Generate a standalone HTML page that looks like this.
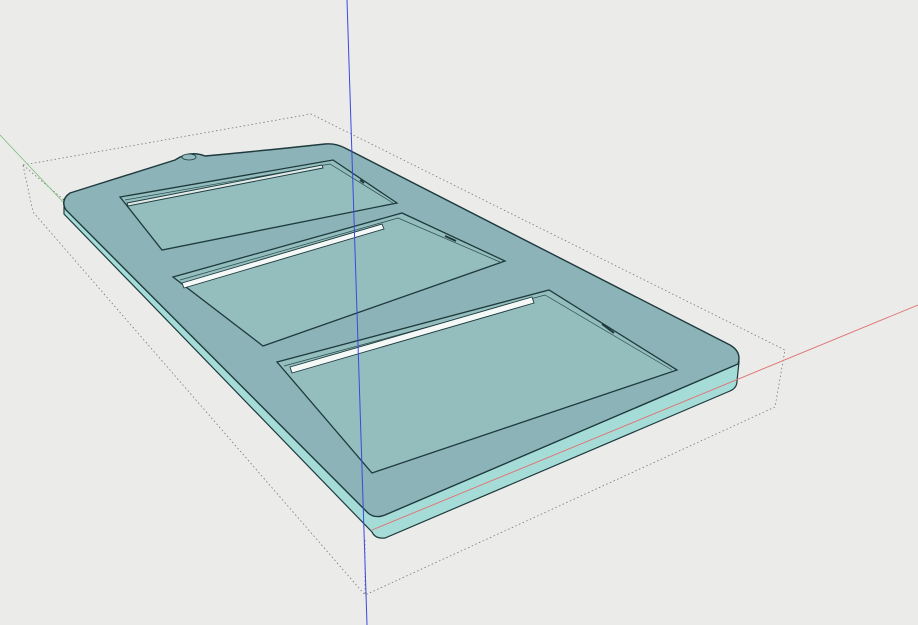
<!DOCTYPE html>
<html><head><meta charset="utf-8"><style>
html,body{margin:0;padding:0;background:#ebebea;width:918px;height:625px;overflow:hidden}
svg{display:block}
</style></head><body>
<svg width="918" height="625" viewBox="0 0 918 625" xmlns="http://www.w3.org/2000/svg">
<rect width="918" height="625" fill="#ebebea"/>
<g stroke="#777" stroke-width="0.8" stroke-dasharray="1.5,2.5" fill="none">
<path d="M23,165 L311,114 L785,350 L775,407 L365,595 L33,212 Z"/>
<path d="M365,540 L365,595"/>
<path d="M23,165 L64,200"/>
</g>
<line x1="0" y1="135" x2="64" y2="203" stroke="#7cc47c" stroke-width="0.9"/>
<path d="M64,200 L64,214 L372,532 Q375,539 385,538 L730,391 Q737,388 737,381 L739,362 L375,515 Z" fill="#a6dcd8" stroke="#1e3a3c" stroke-width="1.2"/>
<path d="M70,193 L175,160 Q190,150 205,156 Q250,152 325,144 Q335,143 345,148 L730,345 Q742,352 738,364 L385,515 Q375,519 368,513 L66,210 Q60,200 70,193 Z" fill="#8cb3b8" stroke="#1e3a3c" stroke-width="1.4"/>
<ellipse cx="189" cy="157" rx="7" ry="3" fill="#93bbbf" stroke="#1e3a3c" stroke-width="0.8"/>
<g fill="#94bdbd" stroke="#1e3a3c" stroke-width="1.3">
<path d="M120,197 L333,160 L397,203 L162,250 Z"/>
<path d="M173,277 L402,213 L505,261 L263,346 Z"/>
<path d="M277,362 L549,290 L677,370 L372,473 Z"/>
</g>
<g stroke="#2a4a4c" stroke-width="0.7" fill="none">
<path d="M125,200 L330,164 L393,203"/>
<path d="M180,280 L398,218 L500,262"/>
<path d="M284,366 L545,295 L672,370"/>
</g>
<g stroke="#1e3a3c" stroke-width="0.9">
<path d="M127,203 L322,165 L323,168 L128,206 Z" fill="#dfeae9"/>
<path d="M182,283 L382,224 L384,229 L184,288 Z" fill="#f4f8f7"/>
<path d="M290,367 L532,297 L534,303 L292,373 Z" fill="#f4f8f7"/>
</g>
<g stroke="#1e3a3c" stroke-width="2">
<line x1="360" y1="180" x2="364" y2="183"/>
<line x1="445" y1="236" x2="456" y2="241"/>
<line x1="602" y1="324" x2="614" y2="333"/>
</g>
<line x1="372" y1="530" x2="918" y2="305" stroke="#e07070" stroke-width="0.9"/>
<line x1="347" y1="0" x2="367" y2="625" stroke="#3a4ae0" stroke-width="1"/>
</svg>
</body></html>
